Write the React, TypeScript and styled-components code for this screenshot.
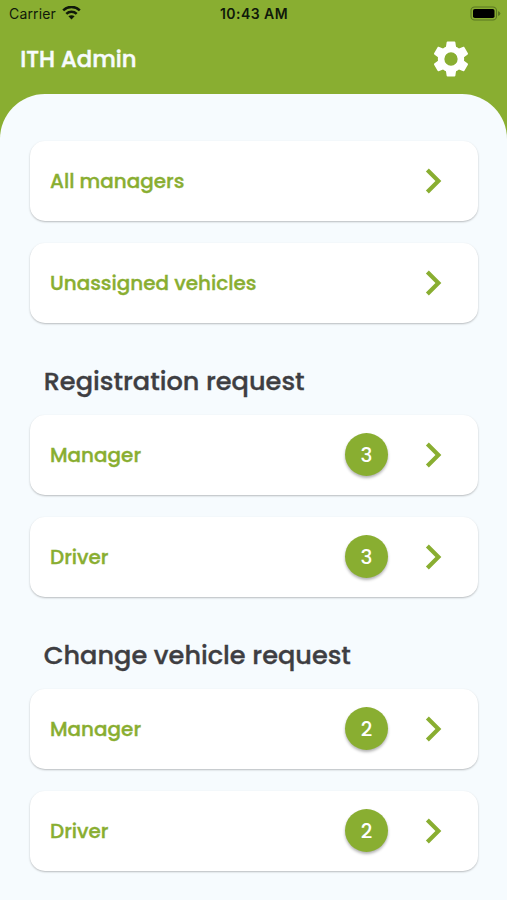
import React from "react";
import styled, { createGlobalStyle } from "styled-components";
import { MdChevronRight } from "react-icons/md";

const GREEN = "#89ae31";

const GlobalStyle = createGlobalStyle`
  * { box-sizing: border-box; }
  body { margin: 0; background: ${GREEN}; }
`;

const Screen = styled.div`
  width: 507px;
  height: 900px;
  overflow: hidden;
  display: flex;
  flex-direction: column;
  background: ${GREEN};
  font-family: Poppins, Inter, sans-serif;
`;

const StatusBar = styled.div`
  height: 28px;
  flex: none;
  display: grid;
  grid-template-columns: 1fr auto 1fr;
  align-items: center;
  padding: 0 6px 0 9px;
  color: #10190a;
  font: 400 14px/28px Inter, sans-serif;
`;

const Carrier = styled.div`
  display: flex;
  align-items: center;
  gap: 6px;
  letter-spacing: 0.15px;
`;

const Clock = styled.div`
  margin-right: 2px;
  font-weight: 600;
  letter-spacing: 0.45px;
`;

const Battery = styled.svg`
  justify-self: end;
  margin-bottom: 2px;
`;

const Wifi = styled.svg`
  margin-bottom: 2px;
`;

const Header = styled.header`
  height: 66px;
  flex: none;
  display: flex;
  justify-content: space-between;
  padding: 10px 34.6px 0 20.3px;
  color: #f7fbfe;
`;

const Gear = styled.svg`
  margin-top: 0.4px;
`;

const Title = styled.h1`
  margin: 0;
  font-size: 22.7px;
  line-height: 43px;
  font-weight: 500;
  -webkit-text-stroke: 0.5px #f7fbfe;
`;

const Content = styled.main`
  flex: 1;
  padding: 47px 29px 0 30px;
  background: #f6fbfe;
  border-radius: 45px 45px 0 0;
`;

const CardList = styled.div`
  display: flex;
  flex-direction: column;
  gap: 22px;
`;

const Card = styled.div`
  height: 80px;
  display: flex;
  align-items: center;
  padding: 0 20px 1px;
  background: #fff;
  border-radius: 15px;
  box-shadow: 0 1px 2px rgba(0, 0, 0, 0.25);
  color: ${GREEN};
`;

const Label = styled.span`
  flex: 1;
  padding-top: 1px;
  font-size: 19.95px;
  line-height: 30px;
  font-weight: 500;
  -webkit-text-stroke: 0.35px ${GREEN};
`;

const Badge = styled.span`
  width: 43px;
  height: 43px;
  margin-right: 20px;
  border-radius: 50%;
  display: flex;
  align-items: center;
  justify-content: center;
  background: ${GREEN};
  color: #fff;
  font-size: 20px;
  font-weight: 500;
  box-shadow: 0 2px 3px rgba(0, 0, 0, 0.3);
`;

const SectionTitle = styled.h2`
  margin: 0;
  height: 92px;
  padding: 39px 0 0 13.7px;
  font-size: 25.6px;
  line-height: 38px;
  font-weight: 500;
  -webkit-text-stroke: 0.35px #3e3e42;
  color: #3e3e42;
`;

const WifiIcon = () => (
  <Wifi width="19" height="15" viewBox="0 0 19 15" fill="none" stroke="#10190a" strokeWidth="2.5">
    <path d="M1.2 4.3C5.8 -.2 13.2 -.2 17.8 4.3" />
    <path d="M4.3 7.8C7.2 5 11.8 5 14.7 7.8" />
    <path d="M9.5 13.4L6.4 10.3C8.2 8.8 10.8 8.8 12.6 10.3Z" fill="#10190a" stroke="none" />
  </Wifi>
);

const BatteryIcon = () => (
  <Battery width="31" height="15" viewBox="0 0 31 15">
    <rect x="1" y="1" width="25.5" height="13" rx="3.6" fill="none" stroke="#5a7722" strokeWidth="1.1" />
    <rect x="3" y="3" width="21.5" height="9" rx="1.8" fill="#000" />
    <path d="M28 5Q30.4 6 30.4 7.5T28 10Z" fill="#5a7722" />
  </Battery>
);

const SettingsIcon = () => (
  <Gear width="42" height="42" viewBox="0 0 24 24" fill="#fff">
    <path d="M19.43 12.98c.04-.32.07-.64.07-.98s-.03-.66-.07-.98l2.11-1.65c.19-.15.24-.42.12-.64l-2-3.46c-.12-.22-.39-.3-.61-.22l-2.49 1c-.52-.4-1.08-.73-1.69-.98l-.38-2.65C14.46 2.18 14.25 2 14 2h-4c-.25 0-.46.18-.49.42l-.38 2.65c-.61.25-1.17.59-1.69.98l-2.49-1c-.23-.09-.49 0-.61.22l-2 3.46c-.13.22-.07.49.12.64l2.11 1.65c-.04.32-.07.65-.07.98s.03.66.07.98l-2.11 1.65c-.19.15-.24.42-.12.64l2 3.46c.12.22.39.3.61.22l2.49-1c.52.4 1.08.73 1.69.98l.38 2.65c.03.24.24.42.49.42h4c.25 0 .46-.18.49-.42l.38-2.65c.61-.25 1.17-.59 1.69-.98l2.49 1c.23.09.49 0 .61-.22l2-3.46c.12-.22.07-.49-.12-.64l-2.11-1.65zM12 15.8a3.8 3.8 0 1 1 0-7.6 3.8 3.8 0 0 1 0 7.6z" />
  </Gear>
);

type RowProps = { label: string; count?: number };

const Row = ({ label, count }: RowProps) => (
  <Card>
    <Label>{label}</Label>
    {count !== undefined && <Badge>{count}</Badge>}
    <MdChevronRight size={50} />
  </Card>
);

export default function App() {
  return (
    <>
      <GlobalStyle />
      <Screen>
        <StatusBar>
          <Carrier>
            <span>Carrier</span>
            <WifiIcon />
          </Carrier>
          <Clock>10:43 AM</Clock>
          <BatteryIcon />
        </StatusBar>
        <Header>
          <Title>ITH Admin</Title>
          <SettingsIcon />
        </Header>
        <Content>
          <CardList>
            <Row label="All managers" />
            <Row label="Unassigned vehicles" />
          </CardList>
          <SectionTitle>Registration request</SectionTitle>
          <CardList>
            <Row label="Manager" count={3} />
            <Row label="Driver" count={3} />
          </CardList>
          <SectionTitle>Change vehicle request</SectionTitle>
          <CardList>
            <Row label="Manager" count={2} />
            <Row label="Driver" count={2} />
          </CardList>
        </Content>
      </Screen>
    </>
  );
}
